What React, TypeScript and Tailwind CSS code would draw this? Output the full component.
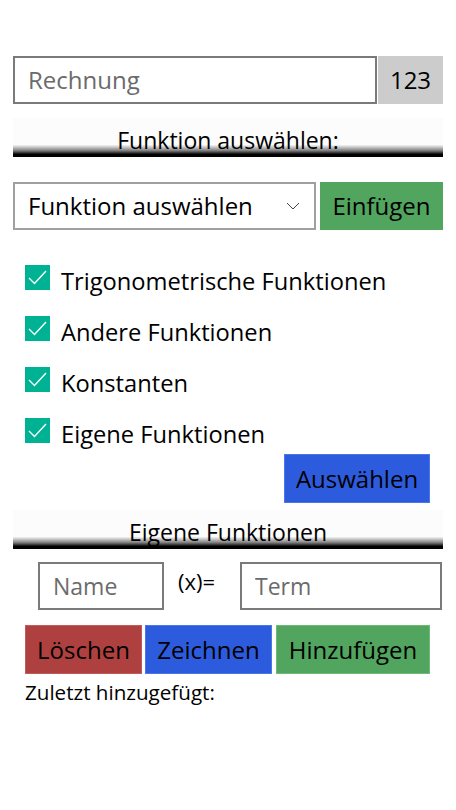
import React, { useState } from "react";

const font = { fontFamily: '"Open Sans", "Noto Sans", sans-serif' };

function SectionHeader({ title }: { title: string }) {
  return (
    <div className="h-[39px] flex items-end justify-center bg-[linear-gradient(to_bottom,#fcfcfc_0%,#fcfcfc_68%,#dedede_72%,#7a7a7a_84%,#000_93%,#000_100%)]">
      <span className="text-[23px] leading-none text-black mb-[5px]">{title}</span>
    </div>
  );
}

function Check({ label, checked, onToggle }: { label: string; checked: boolean; onToggle: () => void }) {
  return (
    <button onClick={onToggle} className="flex items-start gap-[11px] h-[25px] text-left">
      <span className={"w-[25px] h-[25px] shrink-0 flex items-center justify-center " + (checked ? "bg-[#00b294]" : "border-2 border-[#333] bg-white")}>
        {checked && (
          <svg width="21" height="21" viewBox="0 0 21 21" fill="none">
            <path d="M2 11 L7.5 16.5 L19 4" stroke="white" strokeWidth="1.4" />
          </svg>
        )}
      </span>
      <span className="text-[23.7px] leading-none mt-[5px] text-black whitespace-nowrap">{label}</span>
    </button>
  );
}

export default function App() {
  const [checks, setChecks] = useState([true, true, true, true]);
  const labels = ["Trigonometrische Funktionen", "Andere Funktionen", "Konstanten", "Eigene Funktionen"];

  return (
    <div className="w-[456px] h-[810px] bg-white pt-[56px]" style={font}>
      <div className="px-[13px]">
        <div className="flex h-[48px]">
          <div className="flex-1 border-2 border-[#7a7a7a] flex items-center pl-[13px]">
            <input placeholder="Rechnung" className="w-full outline-none text-[24px] placeholder:text-[#6b6b6b] bg-transparent" />
          </div>
          <div className="w-[65px] bg-[#cccccc] flex items-center justify-center text-[24px] ml-[1px]">123</div>
        </div>

        <div className="mt-[14px]">
          <SectionHeader title="Funktion auswählen:" />
        </div>

        <div className="flex mt-[25px] h-[48px] gap-[4px]">
          <div className="w-[303px] border-2 border-[#a0a0a0] flex items-center justify-between pl-[13px] pr-[14px]">
            <span className="text-[24px] text-black">Funktion auswählen</span>
            <svg width="14" height="8" viewBox="0 0 14 8" fill="none">
              <path d="M1 1 L7 7 L13 1" stroke="#444" strokeWidth="1" />
            </svg>
          </div>
          <button className="flex-1 bg-[#52a55e] text-[24px] text-black">Einfügen</button>
        </div>
      </div>

      <div className="pl-[25px] mt-[35px] flex flex-col gap-[26px]">
        {labels.map((l, i) => (
          <Check
            key={l}
            label={l}
            checked={checks[i]}
            onToggle={() => setChecks(checks.map((c, j) => (j === i ? !c : c)))}
          />
        ))}
      </div>

      <div className="flex justify-end pr-[26px] mt-[11px]">
        <button className="w-[146px] h-[49px] bg-[#2c5cdd] border border-[#4a78ea] text-[24px] text-black">Auswählen</button>
      </div>

      <div className="px-[13px] mt-[7px]">
        <SectionHeader title="Eigene Funktionen" />
      </div>

      <div className="flex items-start mt-[13px] pl-[38px] pr-[14px] h-[48px]">
        <div className="w-[126px] h-[48px] border-2 border-[#7a7a7a] flex items-center pl-[13px]">
          <input placeholder="Name" className="w-full outline-none text-[23px] placeholder:text-[#6b6b6b] bg-transparent" />
        </div>
        <span className="ml-[14px] mt-[3px] text-[22px] text-black">(x)=</span>
        <div className="ml-auto w-[202px] h-[48px] border-2 border-[#7a7a7a] flex items-center pl-[13px]">
          <input placeholder="Term" className="w-full outline-none text-[23px] placeholder:text-[#6b6b6b] bg-transparent" />
        </div>
      </div>

      <div className="flex pl-[25px] mt-[15px] gap-[3px] h-[49px]">
        <button className="w-[117px] bg-[#ae4040] border border-[#c45a5a] text-[24px] text-black">Löschen</button>
        <button className="w-[127px] bg-[#2c5cdd] border border-[#4a78ea] text-[24px] text-black">Zeichnen</button>
        <button className="w-[154px] ml-[1px] bg-[#52a55e] border border-[#6cbc78] text-[24px] text-black">Hinzufügen</button>
      </div>

      <div className="pl-[25px] mt-[5px] text-[20.6px] text-black leading-[26px]">Zuletzt hinzugefügt:</div>
    </div>
  );
}
